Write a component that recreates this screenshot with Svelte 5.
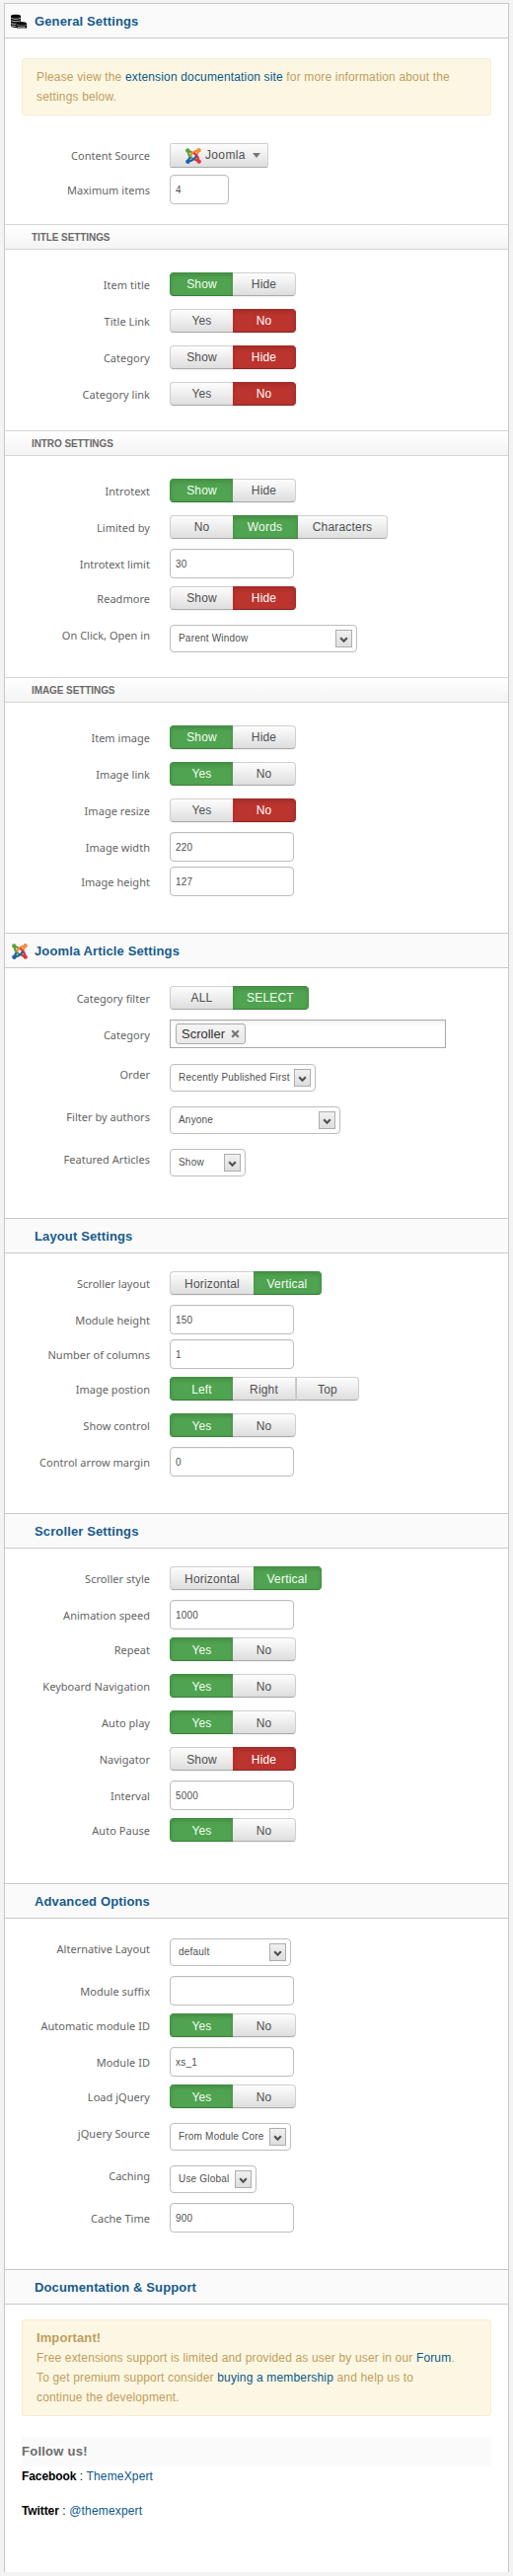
<script>
  const toggle = (label, options, active, tone = 'green') => ({ kind: 'toggle', label, options, active, tone });
  const input = (label, value, width = 126) => ({ kind: 'input', label, value, width });
  const select = (label, value, width) => ({ kind: 'select', label, value, width });

  const SH = [['Show', 64], ['Hide', 64]];
  const YN = [['Yes', 64], ['No', 64]];
  const HV = [['Horizontal', 85], ['Vertical', 69]];

  const sections = [
    {
      title: 'General Settings', icon: 'database', notice: true,
      groups: [
        { rows: [{ kind: 'source', label: 'Content Source', value: 'Joomla' }, input('Maximum items', '4', 60)] },
        { name: 'TITLE SETTINGS', rows: [
          toggle('Item title', SH, 0), toggle('Title Link', YN, 1, 'red'),
          toggle('Category', SH, 1, 'red'), toggle('Category link', YN, 1, 'red')
        ] },
        { name: 'INTRO SETTINGS', rows: [
          toggle('Introtext', SH, 0),
          toggle('Limited by', [['No', 64], ['Words', 66], ['Characters', 91]], 1),
          input('Introtext limit', '30'),
          toggle('Readmore', SH, 1, 'red'),
          select('On Click, Open in', 'Parent Window', 190)
        ] },
        { name: 'IMAGE SETTINGS', rows: [
          toggle('Item image', SH, 0), toggle('Image link', YN, 0), toggle('Image resize', YN, 1, 'red'),
          input('Image width', '220'), input('Image height', '127')
        ] }
      ]
    },
    {
      title: 'Joomla Article Settings', icon: 'joomla',
      groups: [{ rows: [
        toggle('Category filter', [['ALL', 64], ['SELECT', 77]], 1),
        { kind: 'tags', label: 'Category', value: 'Scroller' },
        select('Order', 'Recently Published First', 148),
        select('Filter by authors', 'Anyone', 173),
        select('Featured Articles', 'Show', 77)
      ] }]
    },
    {
      title: 'Layout Settings', low: true,
      groups: [{ rows: [
        toggle('Scroller layout', HV, 1),
        input('Module height', '150'),
        input('Number of columns', '1'),
        toggle('Image postion', [['Left', 64], ['Right', 64], ['Top', 64]], 0),
        toggle('Show control', YN, 0),
        input('Control arrow margin', '0')
      ] }]
    },
    {
      title: 'Scroller Settings', low: true,
      groups: [{ rows: [
        toggle('Scroller style', HV, 1),
        input('Animation speed', '1000'),
        toggle('Repeat', YN, 0),
        toggle('Keyboard Navigation', YN, 0),
        toggle('Auto play', YN, 0),
        toggle('Navigator', SH, 1, 'red'),
        input('Interval', '5000'),
        toggle('Auto Pause', YN, 0)
      ] }]
    },
    {
      title: 'Advanced Options', low: true,
      groups: [{ rows: [
        select('Alternative Layout', 'default', 123),
        input('Module suffix', ''),
        toggle('Automatic module ID', YN, 0),
        input('Module ID', 'xs_1'),
        toggle('Load jQuery', YN, 0),
        select('jQuery Source', 'From Module Core', 123),
        select('Caching', 'Use Global', 88),
        input('Cache Time', '900')
      ] }]
    }
  ];
</script>

{#snippet joomla()}
  <svg class="logo" width="16" height="16" viewBox="0 0 16 16" fill="none" stroke-width="2.2">
    <g stroke="#5fa03a"><path d="M2.6 3.2C4.2 3.2 5.6 3.6 6.8 4.6M3 3.4C2.4 6 3.6 7.2 5 8.6L7.6 11.2" /><circle cx="2.3" cy="2.4" r="1.1" /></g>
    <g stroke="#f58a3c"><path d="M12.8 2.6C12.8 4.2 12.4 5.6 11.4 6.8M12.6 3C10 2.4 8.8 3.6 7.4 5L4.8 7.6" /><circle cx="13.6" cy="2.3" r="1.1" /></g>
    <g stroke="#e0333a"><path d="M13.4 12.8C11.8 12.8 10.4 12.4 9.2 11.4M13 12.6C13.6 10 12.4 8.8 11 7.4L8.4 4.8" /><circle cx="13.7" cy="13.6" r="1.1" /></g>
    <g stroke="#1b62a5"><path d="M3.2 13.4C3.2 11.8 3.6 10.4 4.6 9.2M3.4 13C6 13.6 7.2 12.4 8.6 11L11.2 8.4" /><circle cx="2.4" cy="13.7" r="1.1" /></g>
  </svg>
{/snippet}

{#snippet database()}
  <svg class="logo" width="17" height="16" viewBox="0 0 17 16">
    <path d="M0 2.2C0 .3 10 .3 10 2.2V8L6 9.6V14C3 14 0 13.4 0 12Z" fill="#0b0b0b" />
    <path d="M.2 4.3C2 5.6 8 5.6 9.8 4.3M.2 6.8C2 8.1 8 8.1 9.4 6.8M.2 9.3C1.5 10.4 4 10.5 5.6 10.3M.4 11.6C2 12.5 4 12.6 5.6 12.5" fill="none" stroke="#fff" stroke-width=".7" />
    <path d="M5.5 10.4C5.5 7.2 16.2 7.2 16.2 10.4V14.4H14.2V12.9C12 13.6 9.4 13.6 7.4 12.9V14.8C6 14.5 5.5 14.2 5.5 13.6Z" fill="#0b0b0b" />
    <path d="M6 11.2C8 12.4 13.8 12.4 15.8 11.2" fill="none" stroke="#ddd" stroke-width=".5" />
    <path d="M7.6 14.7C9.5 14 12 14 14.1 14.5" fill="none" stroke="#333" stroke-width=".8" />
  </svg>
{/snippet}

{#snippet header(title, icon)}
  <h3 class="head">
    <span class="slot {icon ?? ''}">
      {#if icon === 'database'}{@render database()}{:else if icon === 'joomla'}{@render joomla()}{/if}
    </span>
    {title}
  </h3>
{/snippet}

<main class="panel">
  {#each sections as section}
    <section class:low={section.low}>
      {@render header(section.title, section.icon)}
      {#if section.notice}
        <div class="alert first">
          Please view the <a href="#docs">extension documentation site</a> for more information about the<br />settings below.
        </div>
      {/if}
      {#each section.groups as group}
        {#if group.name}<h4 class="sub">{group.name}</h4>{/if}
        <div class="rows" class:named={group.name} class:lead={section.notice && !group.name}>
          {#each group.rows as row}
            <div class="row {row.kind}-row">
              <span class="label">{row.label}</span>
              {#if row.kind === 'toggle'}
                <div class="toggle">
                  {#each row.options as [text, width], i}
                    <button class={i === row.active ? row.tone : ''} style="width:{width}px">{text}</button>
                  {/each}
                </div>
              {:else if row.kind === 'input'}
                <input class="field" type="text" value={row.value} aria-label={row.label} style="width:{row.width}px" />
              {:else if row.kind === 'select'}
                <div class="select" style="width:{row.width}px">
                  <span>{row.value}</span>
                  <i class="arrow">
                    <svg width="9" height="7" viewBox="0 0 9 7"><path d="M1.2 1.2L4.5 4.8L7.8 1.2" fill="none" stroke="#505050" stroke-width="2.1" /></svg>
                  </i>
                </div>
              {:else if row.kind === 'tags'}
                <div class="tags">
                  <span class="tag">{row.value}
                    <svg width="9" height="9" viewBox="0 0 9 9"><path d="M1.2 1.2L7.8 7.8M7.8 1.2L1.2 7.8" stroke="#777" stroke-width="2.2" /></svg>
                  </span>
                </div>
              {:else}
                <button class="source">{@render joomla()}<span>{row.value}</span><i class="caret"></i></button>
              {/if}
            </div>
          {/each}
        </div>
      {/each}
      <div class="foot"></div>
    </section>
  {/each}

  <section class="docs">
    {@render header('Documentation & Support')}
    <div class="alert">
      <strong>Important!</strong><br />
      Free extensions support is limited and provided as user by user in our <a href="#forum">Forum</a>.<br />
      To get premium support consider <a href="#membership">buying a membership</a> and help us to<br />continue the development.
    </div>
    <h4 class="follow">Follow us!</h4>
    <p><b>Facebook</b> : <a href="#facebook">ThemeXpert</a></p>
    <p><b>Twitter</b> : <a href="#twitter">@themexpert</a></p>
  </section>
</main>

<style>
  :global(body) {
    background: #f3f3f3;
  }
  .panel, .panel * {
    box-sizing: border-box;
  }
  .panel {
    width: 512px;
    height: 2603px;
    margin: 3px 4px 4px;
    border: solid #c8c8c8;
    border-width: 0 1px;
    background: #fff;
    font: 12px/20px "Liberation Sans", Arial, sans-serif;
    letter-spacing: 0.16px;
    color: #000;
  }
  :global(#app) {
    display: flow-root;
  }
  a {
    color: #0b578a;
    text-decoration: none;
  }
  .head {
    display: flex;
    align-items: center;
    height: 36px;
    margin: 0;
    padding-top: 1px;
    border: solid #c9c9c9;
    border-width: 1px 0;
    background: #fafafa;
    color: #175b8c;
    font-size: 13px;
    font-weight: bold;
    letter-spacing: 0.13px;
  }
  .slot {
    display: flex;
    width: 30px;
    padding-left: 6px;
  }
  .slot.joomla {
    padding-left: 7px;
  }
  .logo {
    display: block;
    flex: none;
  }
  .alert {
    width: 476px;
    margin: 15px 0 0 17px;
    padding: 8px 14px;
    border: 1px solid #f8ecd0;
    border-radius: 3px;
    background: #fcf7e2;
    color: #c09d60;
    white-space: nowrap;
  }
  .alert strong {
    font-size: 13px;
    letter-spacing: 0.1px;
  }
  .alert.first {
    margin-top: 20px;
  }
  .sub {
    height: 26px;
    margin: 0;
    padding-left: 27px;
    border: solid #d6d6d6;
    border-width: 1px 0;
    background: linear-gradient(#fff, #f4f4f4);
    color: #6a6a6a;
    font-size: 10px;
    line-height: 25px;
    letter-spacing: -0.08px;
  }
  .rows {
    padding: 19px 0 11px;
  }
  .rows.named {
    padding-top: 24px;
  }
  .rows.lead {
    padding-top: 29px;
  }
  .foot {
    height: 17px;
  }
  .row {
    display: grid;
    grid-template-columns: 147px 1fr;
    column-gap: 20px;
    align-items: start;
    justify-items: start;
    height: 35px;
  }
  .toggle-row {
    height: 37px;
  }
  .tags-row {
    height: 40px;
  }
  .select-row {
    height: 43px;
  }
  .label {
    justify-self: end;
    font: 11px/24px "Noto Sans", "Open Sans", sans-serif;
    letter-spacing: 0.03px;
    color: #646464;
    white-space: nowrap;
  }
  .toggle {
    display: flex;
    height: 24px;
    margin-top: -1px;
    border-radius: 4px;
    box-shadow: 0 1px 2px rgba(0, 0, 0, 0.06);
  }
  button {
    padding: 0;
    border: 1px solid #cfcfcf;
    border-bottom-color: #ababab;
    background: linear-gradient(#fdfdfd, #dedede);
    color: #505050;
    font: 12px/21px "Liberation Sans", Arial, sans-serif;
    letter-spacing: 0.18px;
    text-align: center;
  }
  .low .toggle button {
    padding-top: 2px;
    line-height: 20px;
  }
  .toggle button + button {
    border-left-width: 0;
    border-left-color: #c4c4c4;
  }
  .toggle button:not(.green) + button:not(.red):not(.green),
  .toggle button + button:nth-child(3) {
    border-left-width: 1px;
  }
  .toggle button.green + button {
    border-left-width: 0;
  }
  .toggle button:first-child {
    border-radius: 4px 0 0 4px;
    border-right-width: 0;
  }
  .toggle button:last-child {
    border-radius: 0 4px 4px 0;
  }
  .toggle .green {
    border-color: #428c42 #459345 #3a7d3a;
    background: #50a350;
    color: #f2fff0;
    box-shadow: inset 0 2px 4px rgba(0, 0, 0, 0.14);
  }
  .toggle .red {
    border-color: #a52b28 #a32c28 #862622;
    background: #bb342e;
    color: #fff;
    box-shadow: inset 0 2px 4px rgba(0, 0, 0, 0.14);
  }
  .field {
    height: 30px;
    margin: -4px 0 0;
    padding: 0 5px;
    border: 1px solid #bdbdbd;
    border-radius: 4px;
    outline: 0;
    background: #fff;
    box-shadow: inset 0 1px 1px rgba(0, 0, 0, 0.05);
    color: #505050;
    font: 10px/28px "Liberation Sans", Arial, sans-serif;
    letter-spacing: 0.2px;
  }
  .select {
    display: flex;
    align-items: center;
    justify-content: space-between;
    height: 28px;
    margin-top: 1px;
    padding: 0 4px 0 8px;
    border: 1px solid #bdbdbd;
    border-radius: 4px;
    background: #fff;
    color: #505050;
    font-size: 10px;
    letter-spacing: 0.2px;
    white-space: nowrap;
  }
  .arrow {
    display: flex;
    align-items: center;
    justify-content: center;
    flex: none;
    width: 17px;
    height: 18px;
    padding-top: 2px;
    border: 1px solid #adadad;
    background: linear-gradient(#f0f0f0, #dedede);
  }
  .tags {
    display: flex;
    align-items: flex-start;
    width: 280px;
    height: 29px;
    margin-top: -4px;
    padding: 3px 5px;
    border: 1px solid #a8a8a8;
    background: linear-gradient(#f1f1f1, #fff 20%);
  }
  .tag {
    display: flex;
    align-items: center;
    justify-content: space-between;
    width: 71px;
    height: 21px;
    padding: 0 5px;
    border: 1px solid #aaa;
    border-radius: 3px;
    background: linear-gradient(#f4f4f4, #e9e9e9);
    color: #333;
    font-size: 13px;
    letter-spacing: 0;
  }
  .source {
    display: flex;
    align-items: center;
    width: 100px;
    height: 25px;
    margin-top: -1px;
    padding: 1px 0 0 15px;
    border-radius: 2px;
    line-height: 22px;
    letter-spacing: 0.35px;
  }
  .source span {
    margin: -2px 7px 0 4px;
  }
  .caret {
    border: solid transparent;
    border-width: 5px 4px 0;
    border-top-color: #777;
    margin-top: -2px;
  }
  .follow {
    width: 476px;
    height: 30px;
    margin: 21px 0 0 17px;
    background: #fafafa;
    color: #6c6c6c;
    font-size: 13px;
    line-height: 29px;
    letter-spacing: 0.25px;
  }
  .docs p {
    margin: 0 0 15px 17px;
  }
  .docs p b {
    letter-spacing: -0.1px;
  }
</style>
